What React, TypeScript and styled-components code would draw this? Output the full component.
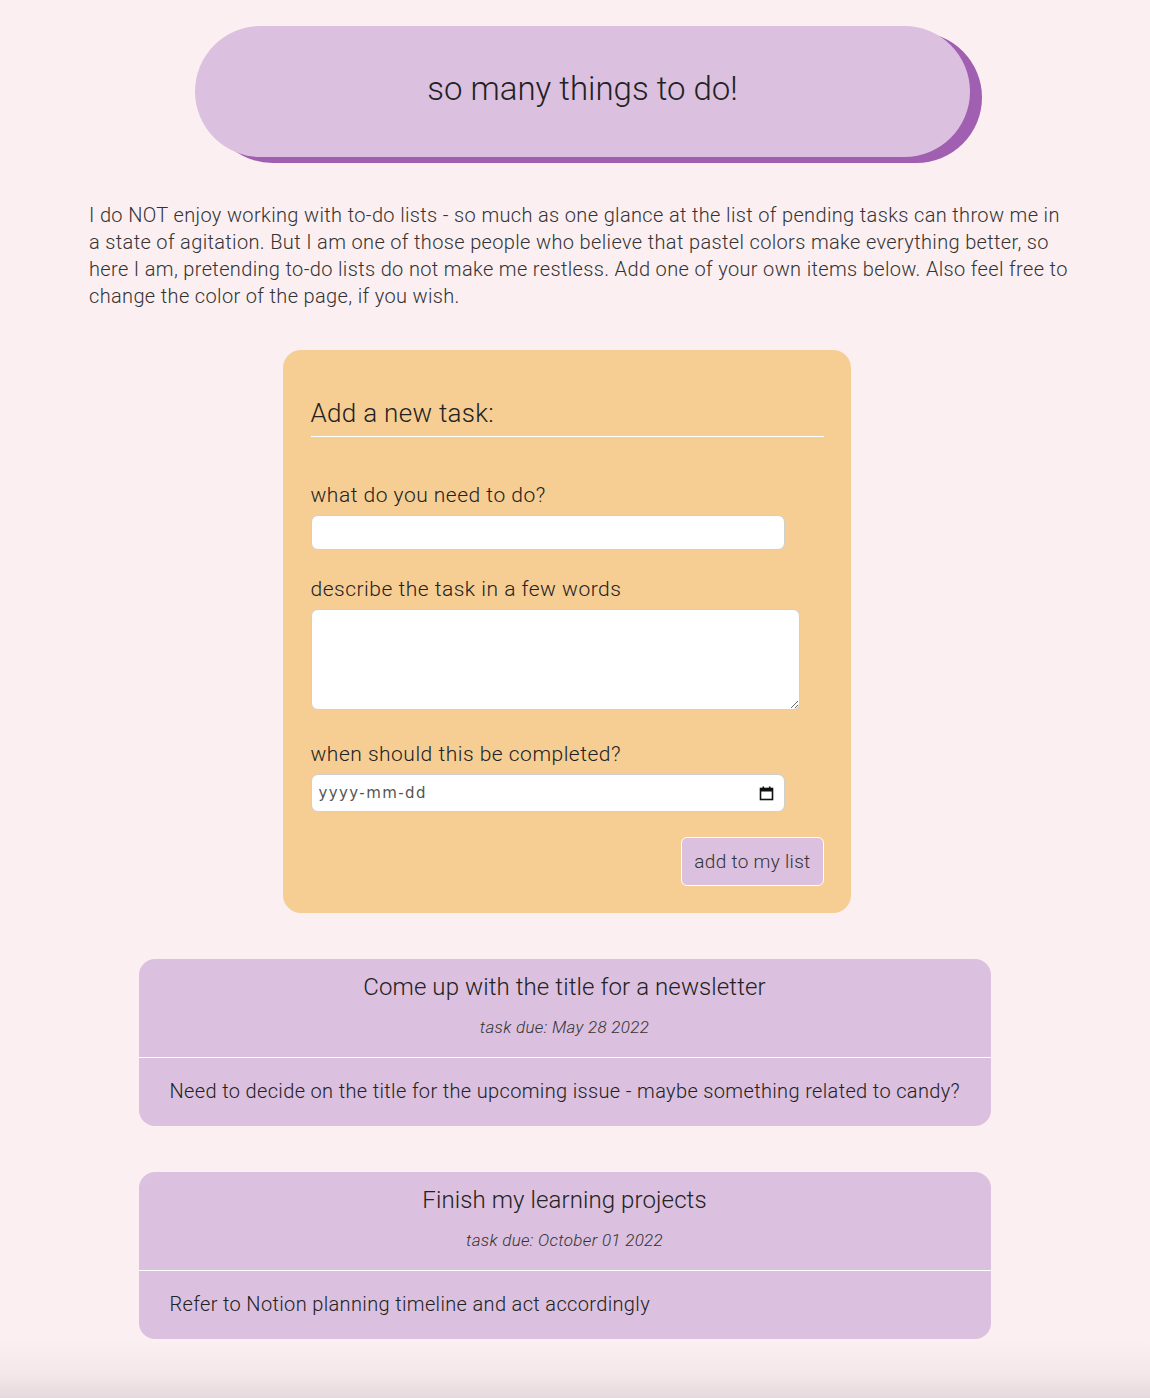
import React from "react";
import styled, { createGlobalStyle } from "styled-components";

const GlobalStyle = createGlobalStyle`
  html, body {
    margin: 0;
    padding: 0;
    background: #fbeff2;
  }
  body {
    font-family: Roboto, "Noto Sans", sans-serif;
    font-weight: 300;
    color: #222;
  }
`;

const Page = styled.div`
  width: 1150px;
  min-height: 1398px;
  box-sizing: border-box;
  padding: 26px 0 60px;
  display: flex;
  flex-direction: column;
  align-items: center;
  background: linear-gradient(
    to bottom,
    #fbeff2 0,
    #fbeff2 1340px,
    #f3e7ea 1375px,
    #e6d9dd 1398px
  );
`;

const TitlePill = styled.div`
  width: 775px;
  height: 131px;
  margin-left: 15px;
  border-radius: 66px;
  background: #dbc0df;
  box-shadow: 12px 6px 0 #a05fb0;
  display: flex;
  align-items: center;
  justify-content: center;
`;

const Title = styled.h1`
  margin: 0 0 6px;
  font-size: 33px;
  font-weight: 300;
  letter-spacing: 0;
`;

const Intro = styled.p`
  align-self: flex-start;
  width: 982px;
  margin: 45px 0 0 89px;
  font-size: 20px;
  line-height: 27px;
  letter-spacing: 0.35px;
  color: #333;
`;

const FormCard = styled.form`
  width: 568px;
  box-sizing: border-box;
  margin: 40px 0 0 -17px;
  padding: 48px 27px 27px 28px;
  border-radius: 18px;
  background: #f6cd93;
  display: flex;
  flex-direction: column;
`;

const FormHeading = styled.h2`
  margin: 0;
  padding-bottom: 8px;
  font-size: 26px;
  font-weight: 300;
  letter-spacing: 0.3px;
  border-bottom: 1px solid #fff;
`;

const Label = styled.label<{ $gap: number }>`
  display: block;
  margin-top: ${(p) => p.$gap}px;
  margin-bottom: 8px;
  font-size: 21px;
  letter-spacing: 0.5px;
`;

const fieldBox = `
  box-sizing: border-box;
  border: 1px solid #cfcfcf;
  border-radius: 7px;
  background: #fff;
`;

const TextField = styled.input`
  ${fieldBox}
  display: block;
  width: 474px;
  height: 35px;
  padding: 0 6px;
`;

const TextArea = styled.textarea`
  ${fieldBox}
  display: block;
  width: 489px;
  height: 101px;
`;

const DateBox = styled.div`
  ${fieldBox}
  width: 474px;
  height: 38px;
  padding: 0 10px 0 7px;
  display: flex;
  align-items: center;
`;

const DateInput = styled.input`
  flex: 1;
  border: none;
  outline: none;
  background: transparent;
  padding: 0;
  font-family: "DejaVu Sans", sans-serif;
  font-size: 15px;
  letter-spacing: 1.4px;
  color: #444;
  &::placeholder {
    color: #555;
  }
`;

const ButtonRow = styled.div`
  display: flex;
  justify-content: flex-end;
  margin-top: 25px;
`;

const AddButton = styled.button`
  height: 49px;
  padding: 0 12px;
  border: 1px solid #fff;
  border-radius: 6px;
  background: #dbc0df;
  font-family: Roboto, sans-serif;
  font-weight: 300;
  font-size: 19px;
  letter-spacing: 0.3px;
  color: #333;
`;

const TaskCard = styled.div`
  width: 852px;
  margin: 46px 0 0 -21px;
  border-radius: 16px;
  background: #dbc0df;
  overflow: hidden;
  &:first-of-type {
    margin-top: 45px;
  }
`;

const TaskHead = styled.div`
  padding: 14px 0 20px;
  text-align: center;
  border-bottom: 1px solid #fff;
`;

const TaskTitle = styled.h3`
  margin: 0;
  font-size: 24px;
  font-weight: 300;
  letter-spacing: 0.1px;
`;

const TaskDue = styled.div`
  margin-top: 16px;
  font-size: 17px;
  font-style: italic;
  letter-spacing: 0.3px;
  color: #333;
`;

const TaskBody = styled.div`
  padding: 21px 10px 23px 31px;
  font-size: 20px;
  letter-spacing: 0.35px;
  color: #222;
`;

const CalendarIcon = () => (
  <svg width="15" height="15" viewBox="0 0 15 15" aria-hidden="true">
    <rect x="1.5" y="2.5" width="12" height="11" fill="none" stroke="#111" strokeWidth="1.6" />
    <rect x="1.5" y="2.5" width="12" height="3" fill="#111" />
    <rect x="3.5" y="0.5" width="1.6" height="3" fill="#111" />
    <rect x="9.9" y="0.5" width="1.6" height="3" fill="#111" />
  </svg>
);

const tasks = [
  {
    title: "Come up with the title for a newsletter",
    due: "May 28 2022",
    text: "Need to decide on the title for the upcoming issue - maybe something related to candy?",
  },
  {
    title: "Finish my learning projects",
    due: "October 01 2022",
    text: "Refer to Notion planning timeline and act accordingly",
  },
];

export default function App() {
  return (
    <>
      <GlobalStyle />
      <Page>
        <TitlePill>
          <Title>so many things to do!</Title>
        </TitlePill>
        <Intro>
          I do NOT enjoy working with to-do lists - so much as one glance at the
          list of pending tasks can throw me in a state of agitation. But I am
          one of those people who believe that pastel colors make everything
          better, so here I am, pretending to-do lists do not make me restless.
          Add one of your own items below. Also feel free to change the color of
          the page, if you wish.
        </Intro>
        <FormCard onSubmit={(e) => e.preventDefault()}>
          <FormHeading>Add a new task:</FormHeading>
          <Label $gap={46} htmlFor="task-name">what do you need to do?</Label>
          <TextField id="task-name" type="text" />
          <Label $gap={27} htmlFor="task-desc">describe the task in a few words</Label>
          <TextArea id="task-desc" />
          <Label $gap={32} htmlFor="task-date">when should this be completed?</Label>
          <DateBox>
            <DateInput id="task-date" type="text" placeholder="yyyy-mm-dd" />
            <CalendarIcon />
          </DateBox>
          <ButtonRow>
            <AddButton type="submit">add to my list</AddButton>
          </ButtonRow>
        </FormCard>
        {tasks.map((t) => (
          <TaskCard key={t.title}>
            <TaskHead>
              <TaskTitle>{t.title}</TaskTitle>
              <TaskDue>task due: {t.due}</TaskDue>
            </TaskHead>
            <TaskBody>{t.text}</TaskBody>
          </TaskCard>
        ))}
      </Page>
    </>
  );
}
